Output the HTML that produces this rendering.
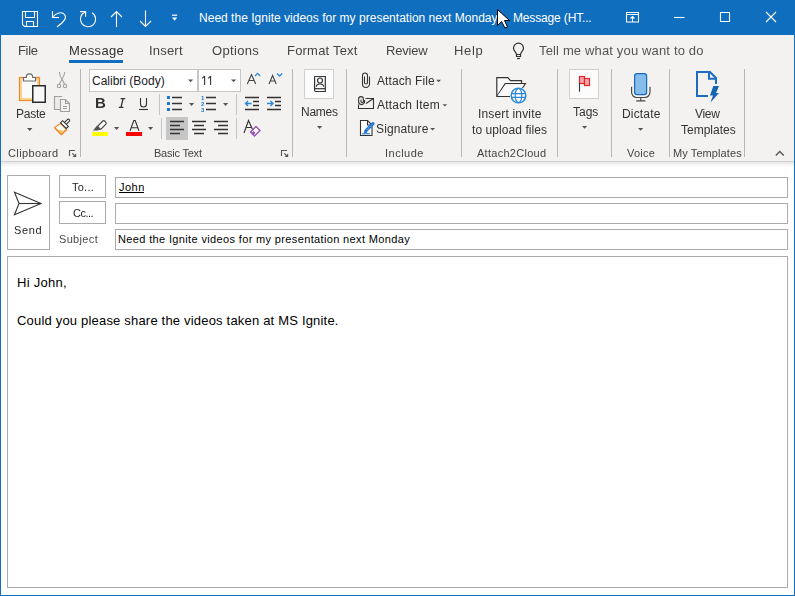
<!DOCTYPE html>
<html><head><meta charset="utf-8">
<style>
*{margin:0;padding:0;box-sizing:border-box}
html,body{width:795px;height:596px;overflow:hidden;background:#fff;font-family:"Liberation Sans",sans-serif}
.a{position:absolute}
.t{position:absolute;white-space:nowrap;font-size:12px;color:#333;line-height:14px;will-change:transform}
.w{color:#fff}
.m{color:#444;font-size:13px}
.g{color:#444;font-size:11px}
.b{color:#262626}
svg{position:absolute;left:0;top:0}
</style></head><body>
<div class="a" style="left:0;top:0;width:795px;height:35px;background:#106ebe"></div>
<div class="a" style="left:0;top:35px;width:795px;height:126px;background:#f3f2f1"></div>
<div class="a" style="left:0;top:161px;width:795px;height:1px;background:#d2d0ce"></div>
<div class="a" style="left:0;top:162px;width:795px;height:5px;background:linear-gradient(#e6e6e6,#fff)"></div>

<!-- title text -->
<div id="tt" class="t w" style="left:199px;top:11px;letter-spacing:0.019px;will-change:auto">Need the Ignite videos for my presentation next Monday</div>
<div id="tt2" class="t w" style="left:513px;top:11px;letter-spacing:-0.154px;will-change:auto">Message (HT...</div>


<!-- menu -->
<div id="m1" class="t m" style="left:18px;top:44px;letter-spacing:-0.334px">File</div>
<div id="m2" class="t m" style="left:69px;top:44px;color:#333;letter-spacing:0.333px">Message</div>
<div class="a" style="left:69px;top:60px;width:54px;height:3px;background:#106ebe"></div>
<div id="m3" class="t m" style="left:149px;top:44px;letter-spacing:0.2px">Insert</div>
<div id="m4" class="t m" style="left:212px;top:44px;letter-spacing:0.333px">Options</div>
<div id="m5" class="t m" style="left:287px;top:44px;letter-spacing:0.2px">Format Text</div>
<div id="m6" class="t m" style="left:386px;top:44px;letter-spacing:-0.2px">Review</div>
<div id="m7" class="t m" style="left:454px;top:44px;letter-spacing:0.667px">Help</div>
<div id="m8" class="t m" style="color:#555;left:539px;top:44px;letter-spacing:0.154px">Tell me what you want to do</div>

<!-- ribbon boxes -->
<div class="a" style="left:89px;top:69px;width:109px;height:23px;border:1px solid #c6c6c6;background:#fff"></div>
<div class="a" style="left:198px;top:69px;width:43px;height:23px;border:1px solid #c6c6c6;background:#fff"></div>
<div class="a" style="left:166px;top:117px;width:22px;height:23px;background:#c6c6c6"></div>
<div class="a" style="left:304px;top:69px;width:30px;height:30px;border:1px solid #cfcfcf;background:#fcfcfc"></div>
<div class="a" style="left:569px;top:69px;width:30px;height:30px;border:1px solid #cfcfcf;background:#fcfcfc"></div>

<!-- ribbon labels -->
<div id="l1" class="t g" style="left:8px;top:146px;letter-spacing:0.375px">Clipboard</div>
<div id="l2" class="t g" style="left:154px;top:146px;letter-spacing:-0.222px">Basic Text</div>
<div id="l3" class="t g" style="left:385px;top:146px;letter-spacing:0.5px">Include</div>
<div id="l4" class="t g" style="left:477px;top:146px;letter-spacing:0.273px">Attach2Cloud</div>
<div id="l5" class="t g" style="left:627px;top:146px;letter-spacing:0.25px">Voice</div>
<div id="l6" class="t g" style="left:673px;top:146px;letter-spacing:0.091px">My Templates</div>

<!-- ribbon button text -->
<div id="r1" class="t" style="left:16px;top:107px;letter-spacing:-0.25px">Paste</div>
<div id="r2" class="t" style="left:92px;top:74px;color:#222;letter-spacing:0px;will-change:auto">Calibri (Body)</div>
<div id="r4" class="t" style="left:377px;top:74px;letter-spacing:0.1px">Attach File</div>
<div id="r5" class="t" style="left:377px;top:98px;letter-spacing:0.2px">Attach Item</div>
<div id="r6" class="t" style="left:376px;top:122px;letter-spacing:0.125px">Signature</div>
<div id="r7" class="t" style="left:301px;top:105px;letter-spacing:-0.25px">Names</div>
<div id="r8" class="t" style="left:478px;top:107px;letter-spacing:0.167px">Insert invite</div>
<div id="r9" class="t" style="left:472px;top:123px;letter-spacing:0.071px">to upload files</div>
<div id="r10" class="t" style="left:573px;top:105px;letter-spacing:0px">Tags</div>
<div id="r11" class="t" style="left:622px;top:107px;letter-spacing:0.167px">Dictate</div>
<div id="r12" class="t" style="left:695px;top:107px;letter-spacing:-0.333px">View</div>
<div id="r13" class="t" style="left:681px;top:123px;letter-spacing:0px">Templates</div>

<div class="t" style="left:95px;top:95px;font-size:15px;line-height:16px;font-weight:bold;color:#333">B</div>


<!-- compose -->
<div class="a" style="left:7px;top:175px;width:43px;height:75px;border:1px solid #ababab"></div>
<div class="a" style="left:59px;top:175px;width:47px;height:23px;border:1px solid #ababab"></div>
<div class="a" style="left:59px;top:201px;width:47px;height:23px;border:1px solid #ababab"></div>
<div class="a" style="left:115px;top:177px;width:673px;height:21px;border:1px solid #ababab"></div>
<div class="a" style="left:115px;top:203px;width:673px;height:21px;border:1px solid #ababab"></div>
<div class="a" style="left:115px;top:229px;width:673px;height:21px;border:1px solid #ababab"></div>
<div class="a" style="left:7px;top:256px;width:781px;height:332px;border:1px solid #ababab"></div>

<div id="c1" class="t b" style="left:14px;top:223px;font-size:11px;letter-spacing:0.667px">Send</div>
<div id="c2" class="t b" style="left:72px;top:180px;font-size:11px;letter-spacing:0.25px">To...</div>
<div id="c3" class="t b" style="left:73px;top:206px;font-size:11px;letter-spacing:-0.5px">Cc...</div>
<div id="c4" class="t" style="left:59px;top:232px;color:#4a4a4a;font-size:11px;letter-spacing:0.333px">Subject</div>
<div id="c5" class="t" style="left:119px;top:180px;color:#000;will-change:auto;font-size:11px;letter-spacing:0.5px">John</div>
<div class="a" style="left:119px;top:192px;width:25px;height:1px;background:#000"></div>
<div id="c6" class="t" style="left:118px;top:232px;color:#000;will-change:auto;font-size:11px;letter-spacing:0.358px">Need the Ignite videos for my presentation next Monday</div>

<div id="p1" class="t" style="left:17px;top:275px;color:#000;font-size:13px;line-height:15px;letter-spacing:0.286px;will-change:auto">Hi John,</div>
<div id="p2" class="t" style="left:17px;top:313px;color:#000;font-size:13px;line-height:15px;letter-spacing:0.192px;will-change:auto">Could you please share the videos taken at MS Ignite.</div>

<svg width="795" height="596" viewBox="0 0 795 596" fill="none">
<!-- title bar icons -->
<g stroke="#fff" stroke-width="1.1">
  <path d="M22.5 11.5H37.5V26.5H24.5L22.5 24.5Z"/>
  <path d="M25.5 11.5V17.5H34.5V11.5"/>
  <path d="M26.5 26.5V21.5H33.5V26.5"/>
  <path d="M52.5 11V17.5H59"/>
  <path d="M53 17C56 12.5 62 11.5 64.5 14.5C67 17.5 65 21 57 27"/>
  <path d="M80 11.6H85.6V16.7"/>
  <path d="M85.2 12.1A7.6 7.6 0 1 0 92.2 12.8"/>
  <path d="M116.5 11.5V27M111 17L116.5 11.5L122 17"/>
  <path d="M145.5 10.5V26.5M140 21L145.5 26.5L151 21"/>
  <path d="M626.5 12.5H638.5V22H626.5ZM626.5 14.5H638.5M632.5 17V22M630.5 18.5L632.5 16.5L634.5 18.5"/>
  <path d="M674 17.5H684.5"/>
  <path d="M720.5 12.5H729.5V21.5H720.5Z"/>
  <path d="M766 12L776 22M776 12L766 22"/>
</g>
<path d="M172 14.6H177.2V15.8H172Z" fill="#fff"/>
<path d="M172 17.4H177.2L174.6 20.8Z" fill="#fff"/>
<!-- cursor -->
<path d="M497.5 9.5V25.5L501.5 21.5L505 28L507.5 27L504.5 20.5H509.5Z" fill="#fff" stroke="#000" stroke-width="1"/>

<!-- bulb -->
<g stroke="#333" stroke-width="1.2">
  <path d="M516.5 54.5C516.5 52.2 513.5 50.8 513.5 48.2A5 5 0 0 1 523.5 48.2C523.5 50.8 520.5 52.2 520.5 54.5"/>
  <path d="M516.5 54.5H520.5V56.5H516.5Z"/>
  <path d="M517 58.5H520"/>
</g>

<!-- ribbon separators -->
<g fill="#b8b6b4">
  <rect x="80" y="69" width="1" height="88"/>
  <rect x="292" y="69" width="1" height="88"/>
  <rect x="346" y="69" width="1" height="88"/>
  <rect x="461" y="69" width="1" height="88"/>
  <rect x="557" y="69" width="1" height="88"/>
  <rect x="611" y="69" width="1" height="88"/>
  <rect x="669" y="69" width="1" height="88"/>
  <rect x="744" y="69" width="1" height="88"/>
</g>
<g fill="#c6c4c2">
  <rect x="159" y="94" width="1" height="21"/>
  <rect x="236" y="94" width="1" height="21"/>
  <rect x="161" y="118" width="1" height="21"/>
  <rect x="236" y="118" width="1" height="21"/>
</g>

<!-- paste -->
<rect x="21" y="79" width="17" height="20" fill="#fafafa" stroke="#fad48f" stroke-width="2"/>
<rect x="19.5" y="77.5" width="20" height="23" stroke="#ec8a2e" stroke-width="1.2"/>
<path d="M23.5 81V77.5H26.3C26.3 72.6 32.7 72.6 32.7 77.5H35.5V81Z" fill="#fff" stroke="#6b6b6b" stroke-width="1.2"/>
<rect x="32.75" y="85.75" width="12.5" height="16.5" fill="#f8f8f8" stroke="#2b2b2b" stroke-width="1.5"/>
<path d="M27 128H32.4L29.7 131Z" fill="#555"/>
<!-- scissors -->
<g stroke="#a0a0a0" stroke-width="1.1">
  <path d="M59.3 72Q59.8 76 62 79L64.6 84.2M64.8 72Q64.3 76 62 79L59.4 84.2"/>
  <circle cx="59" cy="86" r="1.7"/>
  <circle cx="65" cy="86" r="1.7"/>
</g>
<!-- copy -->
<g stroke="#a0a0a0" stroke-width="1.1">
  <path d="M61.5 97V96.5H54.5V109.5H60.5" fill="#ebebeb"/>
  <path d="M60.5 99.5H65.5L69.5 103.5V111.5H60.5Z" fill="#f3f2f1"/>
  <path d="M65.5 99.5V103.5H69.5M63 106.5H67M63 108.5H67"/>
</g>
<!-- format painter -->
<path d="M54.5 127.5L60.5 123.5L66.5 129.5L61.5 134.5Z" fill="#fff" stroke="#ef8f35" stroke-width="1.2"/>
<path d="M56.5 129.5L63.5 130.5L61.5 133Z" fill="#f9c74f"/>
<path d="M55 128.2L61.5 134.5L66.5 129.5" stroke="#ec8a2c" stroke-width="1.5"/>
<path d="M63.5 123.5L67.6 119.4A1.3 1.3 0 0 1 69.4 121.2L65.3 125.3Z" fill="#fff" stroke="#333" stroke-width="1.1"/>
<path d="M60.5 122.8L62.6 120.7L68.3 126.4L66.2 128.5Z" fill="#fff" stroke="#333" stroke-width="1.1"/>
<!-- launcher -->
<g stroke="#555" stroke-width="1.1">
  <path d="M69.5 156V150.5H75"/>
  <path d="M72.3 153.3L74.5 155.5"/>
  <path d="M281.5 156V150.5H287"/>
  <path d="M284.3 153.3L286.5 155.5"/>
</g>
<path d="M76.2 153.6V157.1H72.7Z" fill="#555"/>
<path d="M288.2 153.6V157.1H284.7Z" fill="#555"/>

<!-- size 11 -->
<path d="M204.6 76V85M202.2 78.3L204.6 76.2M210.6 76V85M208.2 78.3L210.6 76.2" stroke="#333" stroke-width="1.1"/>
<!-- font dropdown arrows -->
<path d="M188 79.5H193.2L190.6 82.3Z" fill="#555"/>
<path d="M231 79.5H236.2L233.6 82.3Z" fill="#555"/>
<!-- grow / shrink font -->
<g stroke="#444" stroke-width="1.1">
  <path d="M247.3 84L251.5 74.5L255.7 84M249 80.5H254"/>
  <path d="M269 84L272.6 75.5L276.2 84M270.5 81H274.7"/>
</g>
<g stroke="#2b88d8" stroke-width="1.3">
  <path d="M255 76L257.6 73.4L260.2 76"/>
  <path d="M277 73.5L279.6 76L282.2 73.5"/>
</g>
<!-- italic I -->
<path d="M120.6 98.6H125.2M118.8 107.4H123.4M123.1 98.6L121 107.4" stroke="#333" stroke-width="1.3"/>
<!-- underline U -->
<g stroke="#333" stroke-width="1.1">
  <path d="M140.5 98V104A3 3 0 0 0 146.5 104V98"/>
  <path d="M139 109.5H148"/>
</g>
<!-- bullets -->
<g fill="#1e78d0">
  <rect x="167" y="96" width="3" height="3"/>
  <rect x="167" y="102" width="3" height="3"/>
  <rect x="167" y="108" width="3" height="3"/>
</g>
<g stroke="#333" stroke-width="1.3">
  <path d="M172 97.5H182M172 103.5H182M172 109.5H182"/>
  <path d="M206 97.5H216M206 103.5H216M206 109.5H216"/>
</g>
<g fill="#1e78d0" font-family="Liberation Sans" font-size="6" font-weight="bold">
  <text x="201" y="100">1</text><text x="201" y="106">2</text><text x="201" y="112">3</text>
</g>
<path d="M189 103H194.2L191.6 106Z" fill="#555"/>
<path d="M223 103H228.2L225.6 106Z" fill="#555"/>
<!-- indent -->
<g stroke="#333" stroke-width="1.3">
  <path d="M245 97.5H259M253 101.5H259M253 105.5H259M245 109.5H259"/>
  <path d="M267 97.5H281M275 101.5H281M275 105.5H281M267 109.5H281"/>
</g>
<g stroke="#2b88d8" stroke-width="1.4">
  <path d="M245.5 103.5H251.5M248 101L245.5 103.5L248 106"/>
  <path d="M267 103.5H273M270.5 101L273 103.5L270.5 106"/>
</g>
<!-- highlighter -->
<rect x="97.1" y="122.9" width="9.6" height="4.4" rx="1.6" transform="rotate(-45 101.9 125.1)" fill="#fff" stroke="#444" stroke-width="1.2"/>
<path d="M97.3 125.3L100.9 128.9L97.8 130.6H93Z" fill="#555"/>
<rect x="92" y="132" width="16" height="4" fill="#ffff00"/>
<path d="M114 127H119.2L116.6 130Z" fill="#555"/>
<!-- font color -->
<path d="M130 131L133.8 120.5H135.2L139 131M131.4 127.8H137.6" stroke="#333" stroke-width="1.1"/>
<rect x="126" y="132" width="16" height="4" fill="#ff0000"/>
<path d="M148 127H153.2L150.6 130Z" fill="#555"/>
<!-- align -->
<g stroke="#333" stroke-width="1.3">
  <path d="M170 121.5H184M170 125.5H180M170 129.5H184M170 133.5H180"/>
  <path d="M192 121.5H206M194 125.5H204M192 129.5H206M194 133.5H204"/>
  <path d="M214 121.5H228M218 125.5H228M214 129.5H228M218 133.5H228"/>
</g>
<!-- clear formatting -->
<path d="M244 133L248.5 120.5L253 130.5M246 127.5H252" stroke="#333" stroke-width="1.1"/>
<path d="M250.5 132L256 126.5L260 130.5L254.5 136Z" fill="#fff" stroke="#9b4fb5" stroke-width="1.4"/>
<path d="M251.5 133L253.5 131L255.5 133L253.5 135Z" fill="#9b4fb5"/>

<!-- names icon -->
<g stroke="#333" stroke-width="1.2">
  <path d="M315 76.5H325.3V91.5H315.8Q314.6 91.5 314.6 90.3V77.2Q314.6 76.5 315 76.5Z"/>
  <path d="M314.6 88.7H325.3"/>
  <circle cx="320" cy="80.5" r="2.5"/>
  <path d="M316.4 86.8A3.6 2.8 0 0 1 323.6 86.8"/>
</g>
<path d="M317 126H322.2L319.6 129Z" fill="#555"/>
<!-- attach file -->
<path d="M369.5 76.5V84A3.5 3.5 0 0 1 362.5 84V75.5A2.5 2.5 0 0 1 367.5 75.5V82.5A1.5 1.5 0 0 1 364.5 82.5V76.5" stroke="#333" stroke-width="1.1"/>
<path d="M436.3 79.8H441L438.65 82.2Z" fill="#555"/>
<!-- attach item -->
<g stroke="#333" stroke-width="1.1">
  <path d="M365.5 98.5H373.5V108.5H358.5V104.5"/>
  <path d="M366 103.5L373.5 98.5"/>
  <path d="M364.6 100V101.6A3 3 0 0 1 358.6 101.6V99A2.4 2.4 0 0 1 363.4 99V101.5A1.2 1.2 0 0 1 361 101.5V99.5"/>
</g>
<path d="M442.6 104.2H447.2L444.9 106.6Z" fill="#555"/>
<!-- signature -->
<path d="M360.5 120.5H367.5L372 125V135.5H360.5Z" fill="#fff" stroke="#333" stroke-width="1.1"/>
<path d="M367.5 120.5V125H372" stroke="#333" stroke-width="1.1"/>
<path d="M366 130.6L373 123.6" stroke="#1e78d0" stroke-width="3.2" stroke-linecap="round"/>
<path d="M366.6 130L372.4 124.2" stroke="#a8d0f4" stroke-width="0.8" stroke-dasharray="1.2 1"/>
<path d="M363.8 133.4L364.6 130L367.4 132.6Z" fill="#1e78d0"/>
<path d="M362 133.8H370" stroke="#1e78d0" stroke-width="1.1"/>
<path d="M430.2 128H435L432.6 130.4Z" fill="#555"/>

<!-- folder globe -->
<path d="M496.8 96.5V77.6H507.8L510.5 80.6H521.5V84H505.2L497 96.3Z" fill="#f9f9f9"/>
<g stroke="#333" stroke-width="1.2">
  <path d="M510 96.5H496.8V77.6H507.8L510.5 80.6H521.5V83"/>
  <path d="M497 96.3L505.2 83.6H525.4L522.5 88"/>
</g>
<path d="M497.4 95.8L505.6 84.2H524.5L513 96Z" fill="#f8f8f8"/>
<circle cx="518.5" cy="95.5" r="7.3" fill="#fff" stroke="#2b88d8" stroke-width="1.5"/>
<g stroke="#2b88d8" stroke-width="1.2">
  <ellipse cx="518.5" cy="95.5" rx="3.3" ry="7"/>
  <path d="M511.5 93.6H525.5M511.5 97.4H525.5"/>
</g>

<!-- tags -->
<rect x="579.5" y="76.5" width="5" height="7" fill="#fca5ab" stroke="#e02828" stroke-width="1.2"/>
<rect x="584.5" y="78.5" width="5" height="7" fill="#fca5ab" stroke="#e02828" stroke-width="1.2"/>
<path d="M579.5 83V91.7" stroke="#333" stroke-width="1.1"/>
<path d="M582 126H587.2L584.6 128.8Z" fill="#555"/>

<!-- mic -->
<rect x="634.6" y="73.6" width="12" height="21" rx="2.6" fill="#86bdea" stroke="#1a6cbf" stroke-width="1.25"/>
<path d="M631.6 86.8V92.3A5.2 5.2 0 0 0 636.8 97.5H644.8A5.2 5.2 0 0 0 650 92.3V86.8M640.8 97.5V100.5M636.2 100.8H645.4" stroke="#444" stroke-width="1.15"/>
<path d="M638 128H643.2L640.6 130.8Z" fill="#555"/>

<!-- templates -->
<path d="M708 96H697V72H710L716 78V84" stroke="#1d6cc1" stroke-width="2"/>
<path d="M709 72V78.8H716" stroke="#1d6cc1" stroke-width="2"/>
<path d="M713.3 86H719L716 93H719L710.5 102.5L713 95.6H710Z" fill="#1763b5"/>

<!-- collapse -->
<path d="M775.8 155.5L779.8 151.5L783.8 155.5" stroke="#555" stroke-width="1.4"/>

<!-- send -->
<path d="M14.5 192.3L41 203.5L14.5 214.7L19 203.5Z" stroke="#333" stroke-width="1.1" fill="#fff"/>
<path d="M19 203.5H41" stroke="#333" stroke-width="1.1"/>
</svg>

<!-- window border -->
<div class="a" style="left:0;top:0;width:1px;height:596px;background:#106ebe"></div>
<div class="a" style="left:794px;top:0;width:1px;height:596px;background:#106ebe"></div>
<div class="a" style="left:0;top:595px;width:795px;height:1px;background:#106ebe"></div>
</body></html>
